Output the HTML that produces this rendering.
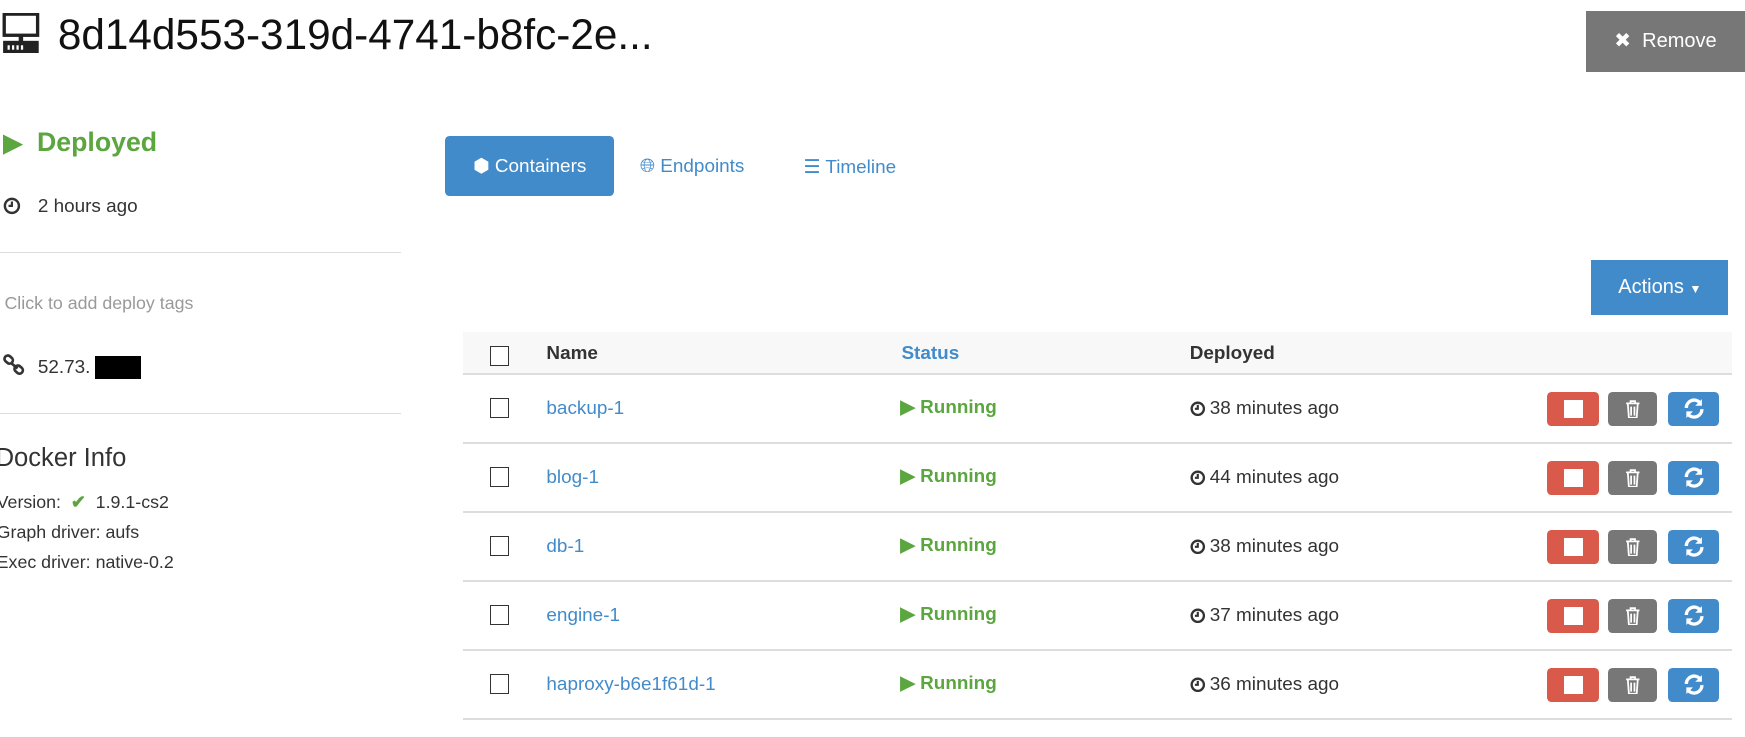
<!DOCTYPE html>
<html><head><meta charset="utf-8"><style>
html,body{margin:0;padding:0;background:#fff;overflow:hidden;width:1745px;height:737px}
#w{zoom:1.1129;position:relative;width:1568px;height:662px;font-family:"Liberation Sans",sans-serif;color:#333;font-size:17px}
.a{position:absolute;white-space:nowrap}
.hr{position:absolute;height:1px;background:#ddd}
.blue{color:#428bca}
.green{color:#5ca640;font-weight:bold}
.cb{position:absolute;width:16px;height:16px;border:1.5px solid #333;background:#fff}
.btn{position:absolute;height:31px;border-radius:4px}
.row-line{position:absolute;left:416px;width:1140px;height:2px;background:#ddd}
</style></head><body><div id="w">
<svg class="a" style="left:2px;top:12px" width="34" height="36" viewBox="0 0 34 36">
<rect x="2" y="1" width="30" height="19" fill="none" stroke="#222" stroke-width="3"/>
<rect x="15" y="20" width="4" height="6" fill="#222"/>
<rect x="1" y="25" width="32" height="11" fill="#222"/>
<rect x="5" y="29" width="2" height="4" fill="#fff"/><rect x="9" y="29" width="2" height="4" fill="#fff"/><rect x="13" y="29" width="2" height="4" fill="#fff"/><rect x="17" y="29" width="2" height="4" fill="#fff"/>
</svg>
<div class="a" style="left:52px;top:10px;font-size:38px;color:#111;letter-spacing:0px">8d14d553-319d-4741-b8fc-2e...</div>
<div class="a" style="left:1425px;top:10px;width:143px;height:55px;background:#777;color:#fff;font-size:18px;line-height:55px;text-align:center">✖&nbsp; Remove</div>

<div class="a green" style="left:3px;top:114px;font-size:24px"><span style="font-size:22px">▶</span>&nbsp;&nbsp;Deployed</div>
<svg class="a" style="left:3px;top:177px" width="16" height="16" viewBox="0 0 16 16"><circle cx="8" cy="8" r="6.3" fill="none" stroke="#333" stroke-width="2.2"/><path d="M8 4v4H5" fill="none" stroke="#333" stroke-width="2"/></svg>
<div class="a" style="left:34px;top:176px;font-size:17px">2 hours ago</div>
<div class="hr" style="left:0;top:226px;width:360px"></div>
<div class="a" style="left:4px;top:263px;font-size:16px;color:#999">Click to add deploy tags</div>
<svg class="a" style="left:2px;top:318px" width="22" height="20" viewBox="0 0 22 20"><rect x="2" y="2" width="8" height="6" rx="3" transform="rotate(40 6 5)" fill="none" stroke="#333" stroke-width="2.4"/><rect x="11" y="11" width="8" height="6" rx="3" transform="rotate(40 15 14)" fill="none" stroke="#333" stroke-width="2.4"/><path d="M8 8l6 5" stroke="#333" stroke-width="2.4"/></svg>
<div class="a" style="left:34px;top:321px;font-size:17px">52.73.</div>
<div class="a" style="left:85px;top:320px;width:42px;height:21px;background:#000"></div>
<div class="hr" style="left:0;top:371px;width:360px"></div>
<div class="a" style="left:-4px;top:399px;font-size:23px">Docker Info</div>
<div class="a" style="left:-3px;top:442px;font-size:16px">Version:&nbsp;&nbsp;<span style="color:#5ca640;font-weight:bold">✔</span>&nbsp;&nbsp;1.9.1-cs2</div>
<div class="a" style="left:-3px;top:469px;font-size:16px">Graph driver: aufs</div>
<div class="a" style="left:-3px;top:496px;font-size:16px">Exec driver: native-0.2</div>

<div class="a" style="left:400px;top:122px;width:152px;height:54px;background:#428bca;border-radius:4px;color:#fff;font-size:17px;line-height:55px;text-align:center">⬢ Containers</div>
<div class="a blue" style="left:575px;top:140px">🌐︎ Endpoints</div>
<div class="a blue" style="left:722px;top:140px">☰ Timeline</div>

<div class="a" style="left:1430px;top:234px;width:123px;height:49px;background:#428bca;color:#fff;font-size:18px;line-height:50px;text-align:center">Actions <span style="font-size:11px">▼</span></div>

<div class="a" style="left:416px;top:298px;width:1140px;height:38px;background:#f8f8f8"></div>
<div class="row-line" style="top:335px"></div>
<div class="cb" style="left:440px;top:311px"></div>
<div class="a" style="left:491px;top:308px;font-weight:bold">Name</div>
<div class="a blue" style="left:810px;top:308px;font-weight:bold">Status</div>
<div class="a" style="left:1069px;top:308px;font-weight:bold">Deployed</div>

<div id="rows"></div>
</div>
<script>
var d=[["backup-1","38"],["blog-1","44"],["db-1","38"],["engine-1","37"],["haproxy-b6e1f61d-1","36"]];
var h="";
d.forEach(function(r,i){var y=336+i*62;var c=y+31;
h+='<div class="cb" style="left:440px;top:'+(c-9)+'px"></div>';
h+='<div class="a blue" style="left:491px;top:'+(c-9)+'px">'+r[0]+'</div>';
h+='<div class="a green" style="left:809px;top:'+(c-10)+'px;line-height:20px"><span style="font-size:17px;line-height:17px">▶</span> Running</div>';
h+='<svg class="a" style="left:1069px;top:'+(c-7)+'px" width="14" height="14" viewBox="0 0 16 16"><circle cx="8" cy="8" r="6.3" fill="none" stroke="#333" stroke-width="2.4"/><path d="M8 4v4H5" fill="none" stroke="#333" stroke-width="2.2"/></svg>';
h+='<div class="a" style="left:1087px;top:'+(c-9)+'px">'+r[1]+' minutes ago</div>';
h+='<div class="btn" style="left:1390px;top:'+(c-15)+'px;width:47px;background:#d9594a"><div style="position:absolute;left:15px;top:7px;width:17px;height:17px;background:#fff"></div></div>';
h+='<div class="btn" style="left:1445px;top:'+(c-15)+'px;width:44px;background:#777"><svg style="position:absolute;left:15px;top:7px" width="14" height="17" viewBox="0 0 14 17"><path d="M1 3h12M5 3V1h4v2M2.5 3l1 13h7l1-13M5.5 6v8M8.5 6v8" fill="none" stroke="#fff" stroke-width="1.6"/></svg></div>';
h+='<div class="btn" style="left:1499px;top:'+(c-15)+'px;width:46px;background:#428bca"><svg style="position:absolute;left:13px;top:6px" width="20" height="19" viewBox="0 0 20 19"><path d="M3 9a7 7 0 0 1 12-5" fill="none" stroke="#fff" stroke-width="3"/><path d="M17 1v6h-6z" fill="#fff"/><path d="M17 10a7 7 0 0 1-12 5" fill="none" stroke="#fff" stroke-width="3"/><path d="M3 18v-6h6z" fill="#fff"/></svg></div>';
h+='<div class="row-line" style="top:'+(y+61)+'px"></div>';
});
document.getElementById('rows').outerHTML=h;
</script>
</body></html>
